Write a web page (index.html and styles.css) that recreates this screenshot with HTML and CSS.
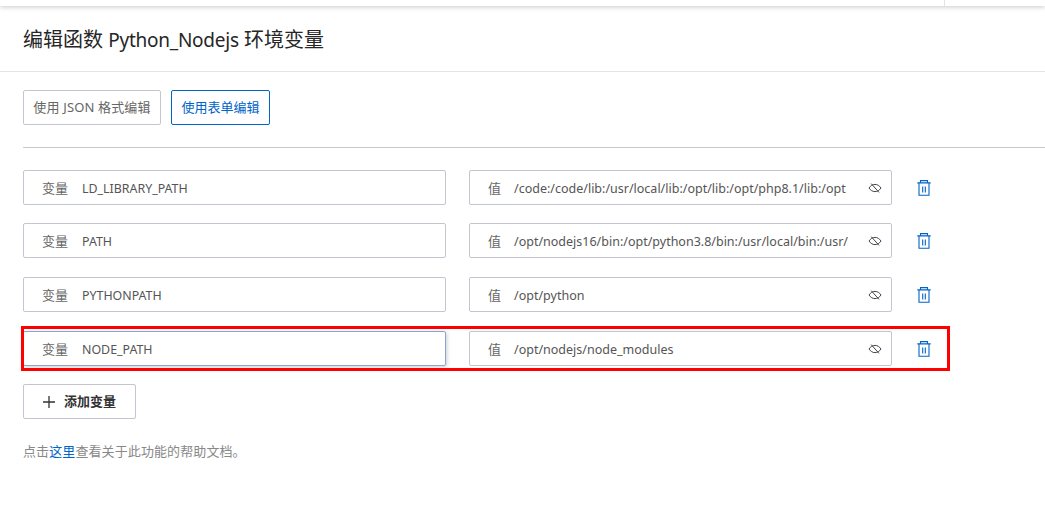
FILE: index.html
```html
<!DOCTYPE html>
<html lang="zh">
<head>
<meta charset="utf-8">
<title>编辑函数环境变量</title>
<link rel="stylesheet" href="styles.css">
</head>
<body>
<div class="topbar"><span class="topbar-sep"></span></div>
<h1 class="title">编辑函数 <span class="latin">Python_Nodejs</span> 环境变量</h1>
<main class="content">
  <div class="tabs">
    <button class="tab tab-json">使用 JSON 格式编辑</button>
    <button class="tab tab-form">使用表单编辑</button>
  </div>
  <div class="rows">
    <div class="row">
      <div class="field field-name"><span class="label">变量</span><span class="value">LD_LIBRARY_PATH</span></div>
      <div class="field field-val"><span class="label">值</span><span class="value clip">/code:/code/lib:/usr/local/lib:/opt/lib:/opt/php8.1/lib:/opt</span>
        <svg class="eye" viewBox="0 0 14 14"><use href="#eye"/></svg></div>
      <svg class="trash" viewBox="0 0 14 16"><use href="#trash"/></svg>
    </div>
    <div class="row">
      <div class="field field-name"><span class="label">变量</span><span class="value">PATH</span></div>
      <div class="field field-val"><span class="label">值</span><span class="value clip">/opt/nodejs16/bin:/opt/python3.8/bin:/usr/local/bin:/usr/</span>
        <svg class="eye" viewBox="0 0 14 14"><use href="#eye"/></svg></div>
      <svg class="trash" viewBox="0 0 14 16"><use href="#trash"/></svg>
    </div>
    <div class="row">
      <div class="field field-name"><span class="label">变量</span><span class="value">PYTHONPATH</span></div>
      <div class="field field-val"><span class="label">值</span><span class="value clip">/opt/python</span>
        <svg class="eye" viewBox="0 0 14 14"><use href="#eye"/></svg></div>
      <svg class="trash" viewBox="0 0 14 16"><use href="#trash"/></svg>
    </div>
    <div class="row row-marked">
      <div class="field field-name field-focus"><span class="label">变量</span><span class="value">NODE_PATH</span></div>
      <div class="field field-val"><span class="label">值</span><span class="value clip">/opt/nodejs/node_modules</span>
        <svg class="eye" viewBox="0 0 14 14"><use href="#eye"/></svg></div>
      <svg class="trash" viewBox="0 0 14 16"><use href="#trash"/></svg>
      <span class="marker"></span>
    </div>
  </div>
  <button class="add"><svg class="plus" viewBox="0 0 12 12"><path d="M6 0v12M0 6h12"/></svg>添加变量</button>
  <p class="help">点击<a href="#">这里</a>查看关于此功能的帮助文档。</p>
</main>
<svg class="defs" width="0" height="0">
  <symbol id="eye" viewBox="0 0 14 14"><path d="M1 7c1.600-2.400 3.600-3.600 6-3.600S11.400 4.600 13 7c-1.600 2.400-3.600 3.600-6 3.600S2.600 9.400 1 7z" fill="none" stroke="currentColor" stroke-width="1"/><path d="M3.200 2.600l7.800 8.800" fill="none" stroke="currentColor" stroke-width="1"/></symbol>
  <symbol id="trash" viewBox="0 0 14 16"><path d="M3.500 2.500V.6h7v1.900M.3 2.900h13.400M2 3.400v11.900h10V3.400M5.700 6.500v6M8.300 6.500v6" fill="none" stroke="currentColor" stroke-width="1.100"/></symbol>
</svg>
</body>
</html>
```
FILE: styles.css
```css
* { box-sizing: border-box; }
html, body { margin: 0; padding: 0; }
body {
  width: 1045px;
  height: 520px;
  overflow: hidden;
  background: #fff;
  font-family: "Noto Sans", "Noto Sans CJK SC", sans-serif;
  color: #333;
}
.topbar {
  height: 6px;
  background: #fff;
  box-shadow: 0 1px 5px rgba(0, 0, 0, 0.22);
  display: flex;
  justify-content: flex-end;
  padding-right: 100px;
}
.topbar-sep { width: 1px; height: 6px; background: #e4e4e4; }
.title {
  margin: 0;
  height: 66px;
  padding: 20px 23px 0;
  font-size: 20px;
  line-height: 28px;
  font-weight: 400;
  color: #262626;
  border-bottom: 1px solid #e5e5e5;
}
.latin { font-size: 19px; letter-spacing: -0.250px; }
.content { padding: 18px 0 0 23px; }
.tabs {
  display: flex;
  gap: 10px;
  padding-bottom: 22px;
  border-bottom: 1px solid #c9c9c9;
}
.tab {
  height: 35px;
  padding: 0;
  background: #fff;
  border: 1px solid #c4c6cf;
  border-radius: 2px;
  font: 13px/1 "Noto Sans", "Noto Sans CJK SC", sans-serif;
  color: #666;
}
.tab-json { width: 138px; letter-spacing: 0.150px; }
.tab-form { width: 99px; border-color: #0064c8; color: #0064c8; }
.rows { display: flex; flex-direction: column; gap: 19px; padding-top: 22px; }
.row { display: flex; align-items: center; position: relative; height: 35px; }
.row:first-child { margin-bottom: -1px; }
.field {
  height: 35px;
  display: flex;
  align-items: center;
  border: 1px solid #c4c6cf;
  border-radius: 2px;
  background: #fff;
  font-size: 13px;
  color: #555;
}
.field-name { width: 423px; padding-left: 18px; }
.field-val { width: 423px; margin-left: 23px; padding-left: 18px; }
.field-name .label { margin-right: 14px; }
.field-focus { border-color: #8aa6d0; box-shadow: 1px 1px 4px rgba(0, 0, 0, 0.2); }
.label { color: #666; margin-right: 13px; flex: none; }
.value { color: #555; white-space: nowrap; font-size: 12.400px; padding-top: 1px; }
.clip { width: 334px; font-size: 12.500px; }
.eye { width: 14px; height: 14px; margin-left: 20px; color: #444; flex: none; }
.trash { width: 14px; height: 16px; margin-left: 25px; color: #0064c8; flex: none; }
.marker {
  position: absolute;
  left: -2px;
  top: -5px;
  width: 929px;
  height: 45px;
  border: 3px solid #f00;
  pointer-events: none;
}
.add {
  display: flex;
  align-items: center;
  margin-top: 18px;
  width: 113px;
  height: 35px;
  padding: 0 0 0 19px;
  background: #fff;
  border: 1px solid #c4c6cf;
  border-radius: 2px;
  font: 600 13px/1 "Noto Sans", "Noto Sans CJK SC", sans-serif;
  color: #333;
}
.plus { width: 12px; height: 12px; margin-right: 9px; fill: none; stroke: #333; stroke-width: 1.300; }
.help { margin: 23px 0 0; font-size: 13px; line-height: 18px; color: #888; letter-spacing: 0.100px; }
.help a { color: #0064c8; text-decoration: none; }
.defs { position: absolute; }
```
